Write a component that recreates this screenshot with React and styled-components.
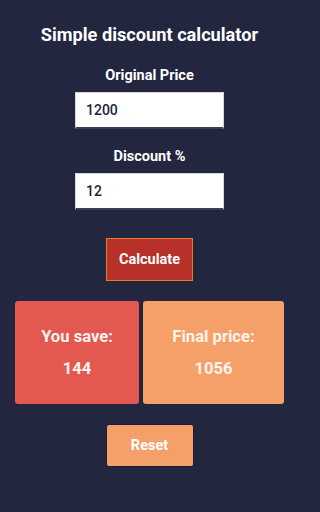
import React, { useState } from "react";
import styled, { createGlobalStyle } from "styled-components";

const GlobalStyle = createGlobalStyle`
  html, body {
    margin: 0;
    padding: 0;
    background: #23263f;
  }
  body {
    font-family: Roboto, "Liberation Sans", sans-serif;
  }
`;

const App = () => {
  const [price, setPrice] = useState("1200");
  const [discount, setDiscount] = useState("12");
  const [result, setResult] = useState({ save: 144, final: 1056 });

  // 계산하기
  const handleCalculate = () => {
    const p = parseFloat(price) || 0;
    const d = parseFloat(discount) || 0;
    const save = Math.round((p * d) / 100);
    setResult({ save, final: p - save });
  };

  const handleReset = () => {
    setPrice("");
    setDiscount("");
    setResult({ save: 0, final: 0 });
  };

  return (
    <Page>
      <GlobalStyle />
      <Title>Simple discount calculator</Title>

      <Label>Original Price</Label>
      <Input value={price} onChange={(e) => setPrice(e.target.value)} />

      <Label $top={20}>Discount %</Label>
      <Input value={discount} onChange={(e) => setDiscount(e.target.value)} />

      <CalcButton onClick={handleCalculate}>Calculate</CalcButton>

      <Results>
        <Card $bg="#e35851" $grow={124}>
          <CardText>You save:</CardText>
          <CardText>{result.save}</CardText>
        </Card>
        <Card $bg="#f5a068" $grow={141}>
          <CardText>Final price:</CardText>
          <CardText>{result.final}</CardText>
        </Card>
      </Results>

      <ResetButton onClick={handleReset}>Reset</ResetButton>
    </Page>
  );
};

export default App;

const Page = styled.div`
  width: 299px;
  height: 512px;
  box-sizing: border-box;
  padding-top: 25px;
  display: flex;
  flex-direction: column;
  align-items: center;
  background: #23263f;
  color: #ffffff;
`;

const Title = styled.h1`
  margin: 0;
  font-size: 18.2px;
  line-height: 20px;
  font-weight: 700;
`;

const Label = styled.div`
  margin-top: ${(p) => p.$top ?? 23}px;
  margin-bottom: 8px;
  font-size: 14.5px;
  line-height: 16px;
  font-weight: 700;
`;

const Input = styled.input`
  width: 149px;
  height: 37px;
  box-sizing: border-box;
  padding: 0 10px;
  border: 1px solid #d6d6dc;
  border-bottom: 2px solid #3b3f5c;
  background: #ffffff;
  font-family: Roboto, "Liberation Sans", sans-serif;
  font-size: 14px;
  font-weight: 500;
  color: #1c1f3b;
  outline: none;
`;

const CalcButton = styled.button`
  margin-top: 28px;
  width: 87px;
  height: 43px;
  box-sizing: border-box;
  background: #b8302a;
  border: 1px solid #d9822b;
  color: #ffffff;
  font-family: Roboto, "Liberation Sans", sans-serif;
  font-size: 14.5px;
  font-weight: 700;
  cursor: pointer;
`;

const Results = styled.div`
  margin-top: 20px;
  width: 100%;
  box-sizing: border-box;
  padding: 0 15px;
  display: flex;
  gap: 4px;
`;

const Card = styled.div`
  flex: ${(p) => p.$grow} 1 0;
  height: 103px;
  border-radius: 3px;
  background: ${(p) => p.$bg};
  display: flex;
  flex-direction: column;
  align-items: center;
  justify-content: center;
  gap: 14px;
`;

const CardText = styled.div`
  font-size: 16.6px;
  line-height: 18px;
  font-weight: 700;
  color: #fdf3ee;
`;

const ResetButton = styled.button`
  margin-top: 20px;
  width: 88px;
  height: 43px;
  box-sizing: border-box;
  background: #f4a068;
  border: 1px solid #1c1e33;
  border-radius: 3px;
  color: #ffffff;
  font-family: Roboto, "Liberation Sans", sans-serif;
  font-size: 14.5px;
  font-weight: 700;
  cursor: pointer;
`;
